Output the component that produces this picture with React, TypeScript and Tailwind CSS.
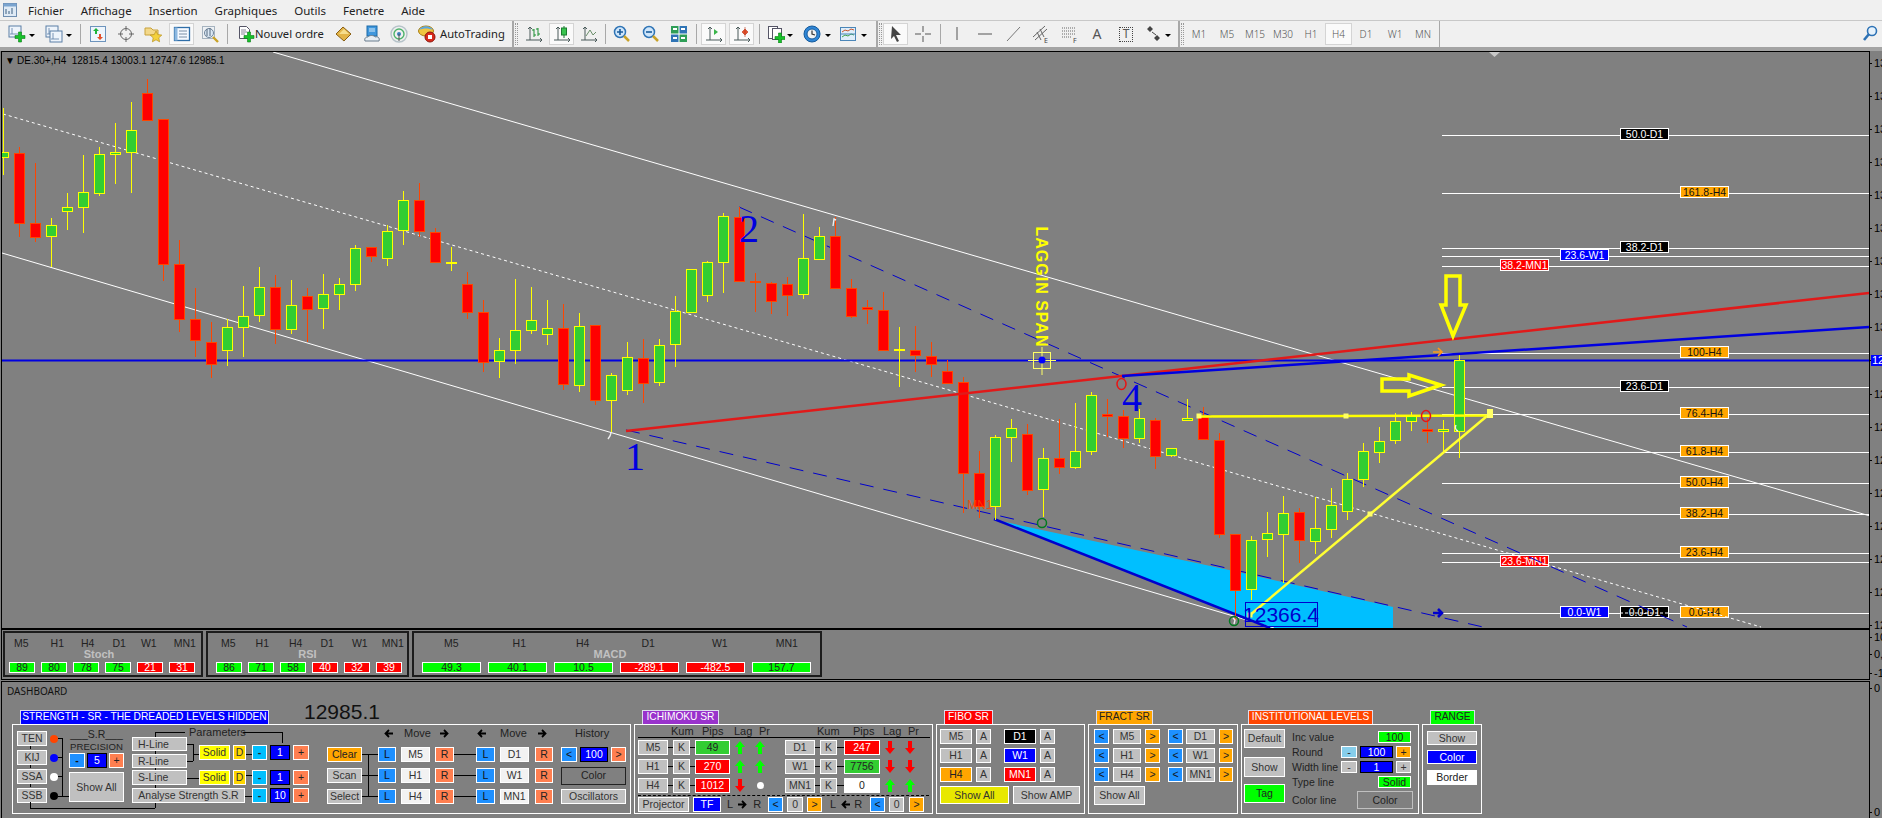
import type { ReactNode } from "react"

// ---- toolbar icons ----
const Ico = ({ children, w = 18 }: { children: ReactNode; w?: number }) => (
  <svg width={w} height={18} viewBox="0 0 18 18" className="shrink-0">{children}</svg>
)

const Plus = ({ x = 0, y = 0 }: { x?: number; y?: number }) => (
  <path transform={`translate(${x} ${y})`} d="M3.5 0h3v3.5H10v3H6.5V10h-3V6.5H0v-3h3.5z" fill="#17c22a" stroke="#0b7d18" strokeWidth=".6" />
)

const Axes = ({ c = "#4a5a5a" }: { c?: string }) => (
  <path d="M5 2v13M1 15h16M3 4l2-2 2 2M15 13l2 2-2 2" fill="none" stroke={c} strokeWidth="1" />
)

const Glass = ({ sign }: { sign?: "+" | "-" }) => (
  <Ico>
    <circle cx="7" cy="7" r="5.5" fill="#cfe6fb" stroke="#2f74b5" strokeWidth="1.5" />
    {sign && <path d={sign === "+" ? "M4 7h6M7 4v6" : "M4 7h6"} stroke="#1b5c9a" strokeWidth="1.6" />}
    <path d="M11 11l5 5" stroke="#c9a227" strokeWidth="2.5" />
  </Ico>
)

const Win = ({ x, y }: { x: number; y: number }) => (
  <g transform={`translate(${x} ${y})`}>
    <rect width="12" height="11" fill="#eef4fb" stroke="#5b7fa6" />
    <path d="M3 2v6M1 8h8" stroke="#5b7fa6" strokeWidth=".8" />
  </g>
)

const Caret = ({ w }: { w: string }) => (
  <div className={`flex justify-center ${w}`}>
    <div className="mt-[2px] h-0 w-0 border-x-[3px] border-t-[3px] border-x-transparent border-t-black" />
  </div>
)

const Sep = ({ w }: { w: string }) => (
  <div className={`flex justify-center ${w}`}><div className="h-[20px] w-px bg-[#a8a8a8]" /></div>
)

const Grip = () => (
  <div className="flex h-[26px] w-[7px] items-center justify-center border-l-2 border-[#a8a8a8]">
    <div className="h-[22px] w-[3px] border-y-0 border-x border-dotted border-[#999]" />
  </div>
)

const Cell = ({ w, children, end }: { w: string; children?: ReactNode; end?: boolean }) => (
  <div className={`flex h-full shrink-0 items-center ${end ? "justify-end" : "justify-center"} ${w}`}>{children}</div>
)

const Sel = ({ children }: { children: ReactNode }) => (
  <div className="flex h-[22px] w-[25px] shrink-0 items-center justify-center border border-[#d4d4d4] bg-[#fafafa]">{children}</div>
)

const Toolbar = () => (
  <div className="flex h-[27px] items-center border-t border-[#c8c8c8] bg-[#f0f0f0] text-[12px] text-[#222] font-['Noto_Sans',sans-serif]">
    <Cell w="w-[8px]" />
    <Cell w="w-[18px]"><Ico><Win x={1} y={1} /><Plus x={7} y={7} /></Ico></Cell>
    <Caret w="w-[12px]" />
    <Cell w="w-[7px]" />
    <Cell w="w-[18px]"><Ico><Win x={1} y={1} /><Win x={5} y={6} /></Ico></Cell>
    <Caret w="w-[12px]" />
    <Sep w="w-[11px]" />
    <Cell w="w-[23px]">
      <Ico>
        <rect x="1.5" y="1.5" width="15" height="15" fill="#eef5fc" stroke="#6d94bd" />
        <path d="M7 3l3 3H8v3H6V6H4z" fill="#1db33a" />
        <path d="M11 15l-3-3h2V9h2v3h2z" fill="#e4502a" />
      </Ico>
    </Cell>
    <Cell w="w-[34px]">
      <Ico>
        <circle cx="9" cy="9" r="5.5" fill="none" stroke="#666" />
        <path d="M9 1v5M9 12v5M1 9h5M12 9h5" stroke="#666" />
      </Ico>
    </Cell>
    <Cell w="w-[20px]">
      <Ico>
        <path d="M1 3h6l2 2h5v5H1z" fill="#f3d88a" stroke="#c8a23c" />
        <path d="M12 6l1.8 3.6 4 .5-3 2.7.8 4-3.6-2-3.6 2 .8-4-3-2.7 4-.5z" fill="#f4d13c" stroke="#b8901c" strokeWidth=".7" />
      </Ico>
    </Cell>
    <Cell w="w-[6px]" />
    <Sel>
      <Ico>
        <rect x="1.5" y="2.5" width="15" height="13" fill="#f5f9ff" stroke="#2f6ea8" strokeWidth="1.3" />
        <path d="M1.5 2.5h3v13h-3z" fill="#8db8e0" />
        <path d="M6 6h8M6 9h8M6 12h8" stroke="#7a8ea5" />
      </Ico>
    </Sel>
    <Cell w="w-[32px]">
      <Ico>
        <rect x="1.5" y="1.5" width="12" height="12" fill="#eef1f4" stroke="#a6b3bf" />
        <circle cx="8" cy="8" r="4.5" fill="#dbe8f5" stroke="#6f8499" />
        <path d="M6 4v7M9 3v8" stroke="#55697d" />
        <path d="M12 12l5 5" stroke="#c9a227" strokeWidth="2.4" />
      </Ico>
    </Cell>
    <Sep w="w-[3px]" />
    <Cell w="w-[26px]" end>
      <Ico>
        <path d="M2.5 1.5h7l3 3v9h-10z" fill="#fff" stroke="#556" />
        <path d="M4 5h5M4 7h6M4 9h4" stroke="#889" />
        <Plus x={7} y={7} />
      </Ico>
    </Cell>
    <div className="w-[69px] shrink-0 whitespace-nowrap text-[11.2px] leading-none">Nouvel ordre</div>
    <Cell w="w-[40px]">
      <Ico>
        <path d="M1 9l7-7 8 7-7 7z" fill="#e3b447" stroke="#8a5f12" />
        <path d="M4 9l5-5 5 5" fill="#f6dd8c" />
      </Ico>
    </Cell>
    <Cell w="w-[16px]">
      <Ico>
        <rect x="4" y="1" width="10" height="10" fill="#3f97dd" stroke="#1d6aa8" />
        <path d="M6 4h6M6 6h6" stroke="#d7ecfb" />
        <path d="M2 16c-1-3 1-4 3-4 1-2 6-2 7 0 3-1 5 1 4 4z" fill="#e6edf3" stroke="#6a7d8d" />
      </Ico>
    </Cell>
    <Cell w="w-[38px]">
      <Ico>
        <circle cx="9" cy="9" r="8" fill="none" stroke="#b6c3c9" strokeWidth="1.4" />
        <circle cx="9" cy="9" r="5" fill="none" stroke="#4db36b" strokeWidth="1.4" />
        <circle cx="9" cy="9" r="2" fill="#3b7fbf" />
        <path d="M9 9v7" stroke="#555" />
      </Ico>
    </Cell>
    <Cell w="w-[18px]">
      <Ico>
        <ellipse cx="8" cy="6" rx="7.5" ry="5" fill="#f0c540" stroke="#a77f16" />
        <path d="M1 5c3-5 11-5 14 0-4-2-10-2-14 0z" fill="#5aa6e0" />
        <circle cx="12" cy="12" r="5" fill="#d92a1c" stroke="#8e150c" />
        <rect x="10" y="10" width="4" height="4" fill="#fff" />
      </Ico>
    </Cell>
    <div className="ml-[4px] w-[65px] shrink-0 whitespace-nowrap text-[11.2px] leading-none">AutoTrading</div>
    <Cell w="w-[7px]" />
    <Grip />
    <Cell w="w-[30px]">
      <Ico>
        <Axes />
        <path d="M9 4v8M7 5h2M9 10h2M13 3v8M11 4h2M13 9h2" stroke="#1c8f33" fill="none" />
      </Ico>
    </Cell>
    <Sel>
      <Ico>
        <Axes />
        <path d="M11 1v12" stroke="#1a7c2e" />
        <rect x="8.5" y="3" width="5" height="7" fill="#38c44e" stroke="#1a7c2e" />
      </Ico>
    </Sel>
    <Cell w="w-[30px]">
      <Ico>
        <Axes />
        <path d="M6 11l4-6 3 5 3-3" fill="none" stroke="#6b8f6b" />
      </Ico>
    </Cell>
    <Sep w="w-[3px]" />
    <Cell w="w-[30px]"><Glass sign="+" /></Cell>
    <Cell w="w-[28px]"><Glass sign="-" /></Cell>
    <Cell w="w-[28px]">
      <Ico>
        <rect x="1" y="1" width="16" height="16" fill="#fff" />
        <rect x="1" y="1" width="7.5" height="7.5" fill="#2e9e57" />
        <rect x="9.5" y="1" width="7.5" height="7.5" fill="#2f74b5" />
        <rect x="1" y="9.5" width="7.5" height="7.5" fill="#2f74b5" />
        <rect x="9.5" y="9.5" width="7.5" height="7.5" fill="#2e9e57" />
        <path d="M3 4h4M11 4h4M3 13h4M11 13h4" stroke="#fff" strokeWidth="2" />
      </Ico>
    </Cell>
    <Sep w="w-[6px]" />
    <Cell w="w-[2px]" />
    <Sel><Ico><Axes /><path d="M9 4l4 3-4 3z" fill="#3ab54a" /></Ico></Sel>
    <Cell w="w-[3px]" />
    <Sel><Ico><Axes /><path d="M12 2v10M9 7l3-3 3 3-3 3z" fill="#e4502a" stroke="#b5341a" strokeWidth=".6" /></Ico></Sel>
    <Sep w="w-[10px]" />
    <Cell w="w-[21px]" end>
      <Ico>
        <rect x="1.5" y="1.5" width="9" height="12" fill="#fff" stroke="#556" />
        <rect x="5.5" y="3.5" width="9" height="11" fill="#fff" stroke="#556" />
        <Plus x={8} y={8} />
      </Ico>
    </Cell>
    <Caret w="w-[10px]" />
    <Cell w="w-[26px]" end>
      <Ico>
        <circle cx="9" cy="9" r="8" fill="#2f86d6" stroke="#155a9b" />
        <circle cx="9" cy="9" r="5" fill="#f2f2f2" stroke="#155a9b" />
        <path d="M9 5.5V9l3 1" fill="none" stroke="#333" strokeWidth="1.2" />
      </Ico>
    </Cell>
    <Caret w="w-[14px]" />
    <Cell w="w-[22px]" end>
      <Ico>
        <rect x="1.5" y="2.5" width="15" height="13" fill="#dfeefa" stroke="#4b86b8" />
        <path d="M3 7l3-2 3 1 3-2 3 1" fill="none" stroke="#c8542b" />
        <path d="M3 12l3-2 3 1 3-2 3 1" fill="none" stroke="#3fa34d" />
        <path d="M2 9h14" stroke="#4b86b8" />
      </Ico>
    </Cell>
    <Caret w="w-[14px]" />
    <Cell w="w-[5px]" />
    <Grip />
    <Sel><Ico><path d="M5 1l9 9H9l3 6-2 1-3-6-3 3z" fill="#444" /></Ico></Sel>
    <Cell w="w-[30px]"><Ico><path d="M9 1v6M9 11v6M1 9h6M11 9h6" stroke="#555" /></Ico></Cell>
    <Sep w="w-[5px]" />
    <Cell w="w-[28px]"><Ico><path d="M9 2v13" stroke="#555" /></Ico></Cell>
    <Cell w="w-[30px]"><Ico><path d="M1 9h14" stroke="#555" /></Ico></Cell>
    <Cell w="w-[26px]"><Ico><path d="M2 16L15 2" stroke="#777" /></Ico></Cell>
    <Cell w="w-[28px]">
      <Ico>
        <path d="M1 12L13 1M3 15L15 4M5 7l4 8M8 4l4 8" stroke="#666" fill="none" />
        <text x="12" y="18" fontSize="7" fill="#444">E</text>
      </Ico>
    </Cell>
    <Cell w="w-[30px]">
      <Ico>
        <path d="M1 3h14M1 6h14M1 9h14M1 12h10" stroke="#666" strokeDasharray="1 1" />
        <text x="12" y="18" fontSize="7" fill="#444">F</text>
      </Ico>
    </Cell>
    <Cell w="w-[24px]"><span className="text-[14px] leading-none text-[#555]">A</span></Cell>
    <Cell w="w-[34px]">
      <div className="flex h-[15px] w-[14px] items-center justify-center border border-dotted border-[#444] text-[12px] leading-none text-[#555]">T</div>
    </Cell>
    <Cell w="w-[20px]">
      <Ico>
        <path d="M6 1l3 3-3 3-3-3zM13 10l3 3-3 3-3-3z" fill="#444" />
        <path d="M8 7l4 3" stroke="#444" />
      </Ico>
    </Cell>
    <Caret w="w-[10px]" />
    <Cell w="w-[5px]" />
    <Grip />
    <div className="flex h-full items-center text-[10px] font-light text-[#555]">
      <Cell w="w-[28px]">M1</Cell>
      <Cell w="w-[28px]">M5</Cell>
      <Cell w="w-[28px]">M15</Cell>
      <Cell w="w-[28px]">M30</Cell>
      <Cell w="w-[28px]">H1</Cell>
      <div className="flex h-[22px] w-[27px] items-center justify-center border border-[#d4d4d4] bg-[#fafafa]">H4</div>
      <Cell w="w-[28px]">D1</Cell>
      <Cell w="w-[30px]">W1</Cell>
      <Cell w="w-[26px]">MN</Cell>
    </div>
    <div className="ml-[3px] h-[26px] w-px bg-[#a8a8a8]" />
    <div className="ml-auto mr-[4px]">
      <svg width="16" height="18" viewBox="0 0 16 18">
        <circle cx="10" cy="6" r="4.5" fill="#e6f2fc" stroke="#2d72b5" strokeWidth="1.6" />
        <path d="M7 9l-5 6" stroke="#2d72b5" strokeWidth="2.6" />
      </svg>
    </div>
  </div>
)

// ---- chart data (y values read off the 3x crops, hence the offset/3) ----
type Bar = [number, number, number, number, number]

const left: Bar[] = [
  [205, 335, 350, 405, 1], [320, 338, 547, 590, 0], [370, 548, 590, 605, 0], [535, 556, 590, 680, 1], [460, 502, 515, 570, 1],
  [345, 455, 500, 578, 1], [322, 343, 461, 467, 1], [250, 337, 344, 432, 1], [186, 271, 338, 458, 1], [118, 160, 241, 241, 0],
  [237, 237, 673, 722, 0], [600, 673, 838, 875, 0], [745, 838, 901, 950, 0], [845, 905, 972, 1015, 0], [838, 862, 932, 977, 1],
  [738, 829, 862, 950, 1], [680, 742, 827, 845, 1], [705, 742, 868, 912, 0], [720, 796, 868, 882, 1], [745, 769, 808, 905, 0],
  [702, 763, 805, 867, 1], [715, 733, 764, 810, 1], [616, 625, 733, 752, 1], [620, 622, 650, 665, 0], [555, 574, 656, 678, 1],
  [453, 481, 572, 615, 1], [430, 481, 575, 592, 0], [565, 577, 667, 668, 0], [622, 666, 669, 692, 1], [695, 733, 817, 838, 0],
  [780, 817, 968, 995, 0], [895, 931, 964, 1013, 1], [717, 871, 932, 972, 1], [742, 841, 872, 882, 1], [780, 865, 884, 915, 1],
  [792, 865, 1032, 1050, 0], [820, 859, 1037, 1055, 1], [855, 855, 1080, 1095, 0], [1000, 1006, 1082, 1175, 1], [905, 952, 1052, 1065, 1],
]

const middle: Bar[] = [
  [478, 533, 607, 670, 0], [478, 496, 607, 617, 1], [348, 393, 493, 560, 1], [267, 267, 395, 395, 1], [243, 247, 347, 365, 1],
  [100, 109, 247, 338, 1], [80, 112, 303, 305, 0], [280, 303, 307, 395, 0], [305, 308, 361, 402, 0], [292, 311, 343, 408, 0],
  [102, 235, 344, 358, 1], [142, 169, 237, 240, 1], [110, 169, 325, 325, 0], [297, 325, 409, 415, 0], [360, 380, 386, 432, 0],
  [335, 389, 509, 512, 0], [440, 507, 510, 620, 1], [437, 510, 525, 575, 0], [485, 527, 552, 590, 0], [540, 572, 607, 610, 0],
  [590, 607, 880, 1000, 0], [812, 880, 978, 1015, 0], [765, 771, 977, 1020, 1], [717, 745, 773, 845, 1], [733, 761, 928, 945, 0],
  [805, 835, 928, 1010, 1], [717, 833, 859, 882, 0], [670, 814, 862, 868, 1], [637, 646, 815, 825, 1], [658, 701, 706, 770, 0],
  [690, 707, 772, 805, 0], [688, 715, 776, 790, 1], [715, 719, 826, 868, 0], [805, 805, 827, 830, 1], [658, 715, 722, 722, 1],
  [680, 710, 777, 780, 0], [760, 779, 1062, 1075, 0], [1062, 1063, 1230, 1320, 0],
]

const right: Bar[] = [
  [858, 871, 1018, 1050, 1], [787, 850, 868, 920, 1], [738, 790, 853, 1000, 1], [775, 787, 871, 940, 0], [740, 835, 874, 912, 1],
  [715, 764, 835, 865, 1], [670, 688, 784, 810, 1], [578, 604, 688, 712, 1], [530, 572, 604, 640, 1], [490, 514, 571, 583, 1],
  [487, 497, 513, 542, 1], [505, 538, 544, 580, 0], [510, 538, 544, 605, 1], [310, 331, 543, 623, 1],
]

const series = [
  { start: 0, top: 40, rows: left },
  { start: 40, top: 180, rows: middle },
  { start: 78, top: 250, rows: right },
]

const Candles = () => (
  <g shapeRendering="crispEdges">
    {series.flatMap(({ start, top, rows }) =>
      rows.map(([hi, open, close, lo, up], n) => {
        const cx = Math.round(3 + (start + n) * 16)
        const c = up ? "#ffff00" : "#ff4500"
        const y = top + open / 3
        return (
          <g key={start + n}>
            <line x1={cx + 0.5} x2={cx + 0.5} y1={top + hi / 3} y2={top + lo / 3} stroke={c} />
            <rect x={cx - 4.5} y={Math.round(y) + 0.5} width={10} height={Math.max(1, Math.round((close - open) / 3))} fill={up ? "#32cd32" : "#ff0000"} stroke={c} />
          </g>
        )
      }),
    )}
  </g>
)

const tags: Record<string, { x: number; fill: string; text: string }> = {
  H4: { x: 1680, fill: "#ffa500", text: "#111" },
  D1: { x: 1620, fill: "#000", text: "#fff" },
  W1: { x: 1560, fill: "#0000ff", text: "#fff" },
  MN1: { x: 1500, fill: "#ff0000", text: "#fff" },
}

const levels: [string, string, number][] = [
  ["50.0", "D1", 135], ["161.8", "H4", 193], ["38.2", "D1", 248], ["23.6", "W1", 256], ["38.2", "MN1", 266],
  ["100", "H4", 353], ["23.6", "D1", 387], ["76.4", "H4", 414], ["61.8", "H4", 452], ["50.0", "H4", 483],
  ["38.2", "H4", 514], ["23.6", "H4", 553], ["23.6", "MN1", 562], ["0.0", "W1", 613], ["0.0", "D1", 613], ["0.0", "H4", 613],
]

const Marker = ({ x, y }: { x: number; y: number }) => <rect x={x - 2.5} y={y - 2.5} width="5" height="5" fill="#ffff66" />

const MainChart = () => (
  <svg width={1867} height={576} viewBox="2 52 1867 576" className="block">
    {levels.map(([n, tf, y]) => (
      <line key={n + tf} x1="1442" x2="1869" y1={y + 0.5} y2={y + 0.5} stroke="#fff" shapeRendering="crispEdges" />
    ))}
    {levels.map(([n, tf, y]) => {
      const t = tags[tf]
      return (
        <g key={n + tf}>
          <rect x={t.x + 0.5} y={y - 6.5} width="48" height="11" rx="1" fill={t.fill} stroke="#fff" shapeRendering="crispEdges" />
          <text x={t.x + 24.5} y={y + 3} textAnchor="middle" fontSize="10.5" fill={t.text}>{`${n}-${tf}`}</text>
        </g>
      )
    })}
    <line x1="1620" x2="1668" y1="613" y2="613" stroke="#fff" strokeDasharray="3 2" />

    <polygon points="1000,521 1229,570 1393,607 1393,628 1270,628 1240,617" fill="#00bfff" />

    <line x1="273" y1="52" x2="1869" y2="515.7" stroke="#fff" />
    <line x1="2" y1="253" x2="1274" y2="628" stroke="#fff" />
    <line x1="3" y1="114" x2="1761" y2="627" stroke="#fff" strokeDasharray="3 3" />
    <line x1="626" y1="430" x2="1483" y2="627" stroke="#0000cd" strokeDasharray="14 10" />
    <line x1="739" y1="207" x2="1687" y2="627" stroke="#0000cd" strokeDasharray="14 10" />
    <line x1="2" y1="360.5" x2="1869" y2="360.5" stroke="#0000e0" strokeWidth="2" />
    <line x1="994" y1="519" x2="1270" y2="628" stroke="#0000cd" strokeWidth="2.5" />

    <Candles />

    <line x1="626" y1="431" x2="1869" y2="293" stroke="#e01a1a" strokeWidth="2.5" />
    <line x1="1122" y1="376" x2="1869" y2="327" stroke="#0000e0" strokeWidth="2.5" />

    <line x1="1199" y1="416.5" x2="1490" y2="415.5" stroke="#ffff00" strokeWidth="2.5" />
    <line x1="1250" y1="615" x2="1487" y2="416" stroke="#ffff33" strokeWidth="2.5" />
    <Marker x={1199} y={416} />
    <Marker x={1346} y={416} />
    <rect x="1487" y="409" width="6" height="9" fill="#ffff66" />
    <Marker x={1250} y={615} />
    <Marker x={1370} y={514} />

    <polygon points="1446,276 1460,276 1460,305 1466,305 1453,336 1441,305 1446,305" fill="none" stroke="#ffff00" strokeWidth="3.5" />
    <polygon points="1382,379 1409,379 1409,375 1441,385 1409,396 1409,391 1382,391" fill="none" stroke="#ffff00" strokeWidth="3.5" />

    <ellipse cx="1426" cy="416" rx="4.5" ry="5.5" fill="none" stroke="#e81414" strokeWidth="1.5" />
    <ellipse cx="1121.5" cy="384" rx="4.5" ry="5.5" fill="none" stroke="#e81414" strokeWidth="1.5" />
    <circle cx="1042" cy="523" r="4.5" fill="none" stroke="#007a1f" strokeWidth="1.5" />
    <circle cx="1234" cy="621" r="4.5" fill="none" stroke="#007a1f" strokeWidth="1.5" />
    <path d="M1233 618l2 2-1 4M1458 431c-3 -1 -3 -4 -2 -6M833 226l1-7 2 1M608 439l2-3 1-3" fill="none" stroke="#eee" strokeWidth="1.4" />
    <path d="M1433 352h9M1438 348l4 4-4 4" fill="none" stroke="#ff9a1a" strokeWidth="1.6" />
    <path d="M1433 613h8M1438 609l4 4-4 4" fill="none" stroke="#0000cd" strokeWidth="2.6" />

    <rect x="1033.5" y="352.5" width="17" height="16" fill="none" stroke="#ffff66" />
    <path d="M1042 347v28M1028 360.5h28" stroke="#ffff66" />
    <circle cx="1042" cy="360" r="3.5" fill="#0000ff" />
    <text transform="rotate(90 1042 287)" x="1042" y="293" textAnchor="middle" fontSize="16" fontWeight="700" letterSpacing="1" fill="#ffff00">LAGGIN SPAN</text>
    <text x="980" y="509" textAnchor="middle" fontSize="12" fill="#ff4500" opacity=".8">MN1</text>

    <g className="font-['Liberation_Serif',serif]" fontSize="40" fill="#0000e0" textAnchor="middle">
      <text x="635" y="470">1</text>
      <text x="749" y="242">2</text>
      <text x="1132" y="411">4</text>
    </g>
    <rect x="1245.5" y="602.5" width="72" height="24" fill="none" stroke="#0000cd" />
    <text x="1281" y="622" textAnchor="middle" fontSize="21" fill="#0000cd">12366.4</text>

    <polygon points="1489,52 1500,52 1494.5,57" fill="#c8c8c8" />

    <text x="5" y="64" fontSize="10" fill="#000">▼</text>
    <text x="17" y="64" fontSize="10" fill="#000" xmlSpace="preserve">DE.30+,H4  12815.4 13003.1 12747.6 12985.1</text>
  </svg>
)

const Axis = ({ h, ticks }: { h: number; ticks: [number, string][] }) => (
  <svg width={12} height={h} className="block shrink-0" viewBox={`0 0 12 ${h}`}>
    {ticks.map(([y, t]) => (
      <g key={y}>
        <line x1="0" x2="2" y1={y + 0.5} y2={y + 0.5} stroke="#000" />
        <text x="4" y={y + 4} fontSize="11" fill="#000">{t}</text>
      </g>
    ))}
  </svg>
)

// 33px between price ticks, first one at y=63 on the page
const priceTicks: [number, string][] = Array.from({ length: 18 }, (_, i) => [
  Math.round(12 + i * 33.05),
  i < 9 ? "13" : "12",
])

// ---- dashboard ----
const tones = {
  grey: "bg-[#c0c0c0] text-[#333] border-white",
  soft: "bg-[#f2f2f2] text-[#333] border-white",
  navy: "bg-[#0000ff] text-white border-black",
  blue: "bg-[#0000ff] text-white border-white",
  dodger: "bg-[#1e90ff] text-[#111] border-white",
  coral: "bg-[#ff7f50] text-[#222] border-white",
  gold: "bg-[#ffd700] text-[#333] border-white",
  yellow: "bg-[#ffff00] text-[#333] border-white",
  lemon: "bg-[#e8e800] text-[#333] border-white",
  sky: "bg-[#00bfff] text-[#222] border-white",
  pale: "bg-[#87ceeb] text-[#222] border-white",
  orange: "bg-[#ffa500] text-[#222] border-white",
  lime: "bg-[#00ff00] text-[#222] border-white",
  leaf: "bg-[#32cd32] text-[#222] border-white",
  red: "bg-[#ff0000] text-white border-white",
  black: "bg-black text-white border-white",
  white: "bg-white text-[#222] border-white",
  hollow: "text-[#222] border-[#222]",
  ghost: "text-[#222] border-[#c0c0c0]",
}

type Tone = keyof typeof tones

const Btn = ({ t = "grey", w, h = "h-[15px]", children }: { t?: Tone; w: string; h?: string; children?: ReactNode }) => (
  <div className={`flex shrink-0 items-center justify-center overflow-hidden whitespace-nowrap border text-[10.5px] leading-none ${tones[t]} ${w} ${h}`}>{children}</div>
)

const Tf = ({ dir }: { dir: "l" | "r" }) => (
  <svg width="10" height="9" viewBox="0 0 10 9" className="shrink-0">
    <path d={dir === "l" ? "M9 4.5H2M5 1L1.5 4.5 5 8" : "M1 4.5h7M5 1l3.5 3.5L5 8"} fill="none" stroke="#000" strokeWidth="1.8" />
  </svg>
)

const Panel = ({ title, tab, w, children, extra }: { title: string; tab: string; w: string; children: ReactNode; extra?: ReactNode }) => (
  <div className={`shrink-0 ${w}`}>
    <div className="flex h-[14px]">
      <div className={`flex items-center justify-center whitespace-nowrap border border-b-0 text-[10.2px] leading-none ${tab}`}>{title}</div>
      {extra}
    </div>
    <div className="relative flex h-[90px] border border-white">{children}</div>
  </div>
)

const Solid = () => (
  <div className="flex items-center">
    <Btn t="yellow" w="w-[31px]">Solid</Btn>
    <div className="ml-[3px]"><Btn t="gold" w="w-[13px]">D</Btn></div>
    <div className="ml-[6px]"><Btn t="sky" w="w-[15px]"><b>-</b></Btn></div>
    <div className="ml-[3px]"><Btn t="navy" w="w-[20px]">1</Btn></div>
    <div className="ml-[3px]"><Btn t="coral" w="w-[16px]">+</Btn></div>
  </div>
)

const MoveRow = ({ lead, leadTone, a, b, children }: { lead: string; leadTone: Tone; a: string; b: string; children: ReactNode }) => (
  <div className="flex h-[15px] items-center">
    <Btn t={leadTone} w="w-[35px]">{lead}</Btn>
    <div className="ml-[16px]"><Btn t="dodger" w="w-[18px]">L</Btn></div>
    <div className="ml-[5px]"><Btn t="soft" w="w-[29px]">{a}</Btn></div>
    <div className="ml-[5px]"><Btn t="coral" w="w-[19px]">R</Btn></div>
    <div className="ml-[22px]"><Btn t="dodger" w="w-[19px]">L</Btn></div>
    <div className="ml-[5px]"><Btn t="soft" w="w-[29px]">{b}</Btn></div>
    <div className="ml-[6px]"><Btn t="coral" w="w-[18px]">R</Btn></div>
    <div className="ml-[8px] flex items-center">{children}</div>
  </div>
)

const Strength = () => (
  <Panel
    title="STRENGTH - SR - THE DREADED LEVELS HIDDEN"
    tab="ml-[8px] w-[249px] bg-[#0000ff] text-white border-[#dde]"
    w="w-[619px]"
    extra={<div className="ml-[35px] -mt-[10px] text-[21px] leading-[24px] text-[#111]">12985.1</div>}
  >
    <svg className="absolute -left-px -top-px" width="619" height="90" viewBox="12 724 619 90" shapeRendering="crispEdges">
      <path
        d="M58 738h4M58 757h4M58 776h4M58 796h12M62 738v58M30 746v3M30 765v3M30 784v3M30 802v6M30 808h125M155 732v76M155 732h30M243 732h39M282 732v11M187 744h6M187 761h6M193 744v17M193 754h6M187 778h12M245 796h7M246 754h6M246 775h6M362 754h16M362 775h16M362 796h16M368 754v42M454 754h22M454 775h22M454 796h22"
        fill="none"
        stroke="#000"
      />
    </svg>

    <div className="ml-[4px] mt-[6px] flex w-[30px] flex-col gap-[4px]">
      <Btn w="w-[30px]">TEN</Btn>
      <Btn w="w-[30px]">KIJ</Btn>
      <Btn w="w-[30px]">SSA</Btn>
      <Btn w="w-[30px]">SSB</Btn>
    </div>
    <div className="relative ml-[3px] mt-[6px] flex w-[8px] flex-col gap-[4px]">
      <div className="flex h-[15px] items-center"><div className="h-[8px] w-[8px] rounded-full bg-[#ff4500]" /></div>
      <div className="flex h-[15px] items-center"><div className="h-[8px] w-[8px] rounded-full bg-[#0000ff]" /></div>
      <div className="flex h-[15px] items-center"><div className="h-[8px] w-[8px] rounded-full bg-white" /></div>
      <div className="flex h-[15px] items-center"><div className="h-[8px] w-[8px] rounded-full bg-black" /></div>
    </div>
    <div className="relative ml-[11px] mt-[3px] flex w-[55px] flex-col">
      <div className="h-[12px] text-center text-[10.5px] leading-[12px] text-[#222]">___S.R___</div>
      <div className="h-[13px] text-center text-[9.6px] leading-[13px] text-[#222]">PRECISION</div>
      <div className="flex gap-[2px]">
        <Btn t="dodger" w="w-[16px]"><b>-</b></Btn>
        <Btn t="navy" w="w-[20px]">5</Btn>
        <Btn t="coral" w="w-[15px]">+</Btn>
      </div>
      <div className="mt-[4px]"><Btn w="w-[55px]" h="h-[30px]">Show All</Btn></div>
    </div>

    <div className="relative ml-[8px] mt-[3px] flex w-[177px] flex-col">
      <div className="h-[9px] pl-[57px] text-[11px] leading-[8px] text-[#222]">Parameters</div>
      <div className="flex h-[31px] items-center">
        <div className="flex w-[55px] flex-col gap-[3px]">
          <Btn w="w-[55px]" h="h-[14px]"><span className="w-full pl-[5px] text-left">H-Line</span></Btn>
          <Btn w="w-[55px]" h="h-[14px]"><span className="w-full pl-[5px] text-left">R-Line</span></Btn>
        </div>
        <div className="ml-[12px]"><Solid /></div>
      </div>
      <div className="mt-[2px] flex h-[15px] items-center">
        <Btn w="w-[55px]"><span className="w-full pl-[5px] text-left">S-Line</span></Btn>
        <div className="ml-[12px]"><Solid /></div>
      </div>
      <div className="mt-[3px] flex h-[15px] items-center">
        <Btn w="w-[113px]">Analyse Strength S.R</Btn>
        <div className="ml-[7px]"><Btn t="sky" w="w-[15px]"><b>-</b></Btn></div>
        <div className="ml-[3px]"><Btn t="navy" w="w-[20px]">10</Btn></div>
        <div className="ml-[3px]"><Btn t="coral" w="w-[16px]">+</Btn></div>
      </div>
    </div>

    <div className="relative ml-[18px] mt-[3px] flex flex-col">
      <div className="mb-[8px] flex h-[11px] items-center text-[11px] leading-none text-[#222]">
        <div className="ml-[57px]"><Tf dir="l" /></div>
        <span className="ml-[10px] w-[25px]">Move</span>
        <div className="ml-[10px]"><Tf dir="r" /></div>
        <div className="ml-[28px]"><Tf dir="l" /></div>
        <span className="ml-[13px] w-[25px]">Move</span>
        <div className="ml-[12px]"><Tf dir="r" /></div>
        <span className="ml-[28px]">History</span>
      </div>
      <div className="flex flex-col gap-[6px]">
        <MoveRow lead="Clear" leadTone="orange" a="M5" b="D1">
          <Btn t="dodger" w="w-[16px]">&lt;</Btn>
          <div className="ml-[3px]"><Btn t="navy" w="w-[28px]">100</Btn></div>
          <div className="ml-[3px]"><Btn t="coral" w="w-[15px]">&gt;</Btn></div>
        </MoveRow>
        <MoveRow lead="Scan" leadTone="grey" a="H1" b="W1">
          <Btn t="hollow" w="w-[65px]" h="h-[18px]">Color</Btn>
        </MoveRow>
        <MoveRow lead="Select" leadTone="grey" a="H4" b="MN1">
          <Btn w="w-[65px]">Oscillators</Btn>
        </MoveRow>
      </div>
    </div>
  </Panel>
)

const Fat = ({ up, c }: { up: boolean; c: string }) => (
  <svg width="10" height="13" viewBox="0 0 10 13" className="shrink-0">
    <path d={up ? "M5 0l5 6H7v7H3V6H0z" : "M5 13L0 7h3V0h4v7h3z"} fill={c} />
  </svg>
)

const IchiSide = ({ tf, pips, tone, lag, pr, mid, gap }: { tf: string; pips: string; tone: Tone; lag: ReactNode; pr: ReactNode; mid: string; gap: string }) => (
  <div className="flex items-center">
    <Btn w="w-[30px]">{tf}</Btn>
    <div className="h-px w-[5px] bg-black" />
    <Btn w="w-[17px]">K</Btn>
    <div className={`h-px bg-black ${gap}`} />
    <Btn t={tone} w={mid}>{pips}</Btn>
    <div className="flex w-[20px] justify-center">{lag}</div>
    <div className="flex w-[20px] justify-center">{pr}</div>
  </div>
)

const up = <Fat up c="#00ff00" />
const down = <Fat up={false} c="#ff0000" />
const dot = <div className="h-[7px] w-[7px] rounded-full bg-white" />

const IchiRow = ({ a, b }: { a: ReactNode; b: ReactNode }) => (
  <div className="flex gap-[15px]">{a}{b}</div>
)

const Ichimoku = () => (
  <Panel title="ICHIMOKU SR" tab="ml-[8px] w-[77px] bg-[#9932cc] text-white border-[#dde]" w="w-[299px]">
    <div className="ml-[3px] flex flex-col">
      <div className="flex h-[13px] w-[292px] items-center border-b border-black text-[11px] leading-none text-[#222]">
        <span className="ml-[33px] w-[31px]">Kum</span>
        <span className="w-[32px]">Pips</span>
        <span className="w-[25px]">Lag</span>
        <span className="w-[58px]">Pr</span>
        <span className="w-[36px]">Kum</span>
        <span className="w-[30px]">Pips</span>
        <span className="w-[25px]">Lag</span>
        <span>Pr</span>
      </div>
      <div className="mt-[2px] flex flex-col gap-[4px]">
        <IchiRow
          a={<IchiSide tf="M5" pips="49" tone="leaf" lag={up} pr={up} mid="w-[35px]" gap="w-[5px]" />}
          b={<IchiSide tf="D1" pips="247" tone="red" lag={down} pr={down} mid="w-[36px]" gap="w-[7px]" />}
        />
        <IchiRow
          a={<IchiSide tf="H1" pips="270" tone="red" lag={up} pr={up} mid="w-[35px]" gap="w-[5px]" />}
          b={<IchiSide tf="W1" pips="7756" tone="leaf" lag={down} pr={down} mid="w-[36px]" gap="w-[7px]" />}
        />
        <IchiRow
          a={<IchiSide tf="H4" pips="1012" tone="red" lag={down} pr={dot} mid="w-[35px]" gap="w-[5px]" />}
          b={<IchiSide tf="MN1" pips="0" tone="white" lag={up} pr={up} mid="w-[36px]" gap="w-[7px]" />}
        />
      </div>
      <div className="mt-[2px] h-0 w-[291px] border-t border-dashed border-black" />
      <div className="mt-[1px] flex items-center text-[11px] leading-none text-[#222]">
        <Btn w="w-[51px]">Projector</Btn>
        <div className="ml-[4px]"><Btn t="blue" w="w-[28px]">TF</Btn></div>
        <span className="ml-[6px]">L</span>
        <div className="ml-[4px]"><Tf dir="r" /></div>
        <span className="ml-[6px]">R</span>
        <div className="ml-[7px]"><Btn t="dodger" w="w-[15px]">&lt;</Btn></div>
        <div className="ml-[4px]"><Btn t="grey" w="w-[16px]">0</Btn></div>
        <div className="ml-[4px]"><Btn t="orange" w="w-[15px]">&gt;</Btn></div>
        <span className="ml-[8px]">L</span>
        <div className="ml-[5px]"><Tf dir="l" /></div>
        <span className="ml-[3px]">R</span>
        <div className="ml-[8px]"><Btn t="dodger" w="w-[15px]">&lt;</Btn></div>
        <div className="ml-[4px]"><Btn t="grey" w="w-[15px]">0</Btn></div>
        <div className="ml-[5px]"><Btn t="orange" w="w-[15px]">&gt;</Btn></div>
      </div>
    </div>
  </Panel>
)

const FiboRow = ({ a, ta = "grey", b, tb }: { a: string; ta?: Tone; b: string; tb: Tone }) => (
  <div className="flex">
    <Btn t={ta} w="w-[32px]">{a}</Btn>
    <div className="ml-[4px]"><Btn w="w-[15px]">A</Btn></div>
    <div className="ml-[13px]"><Btn t={tb} w="w-[32px]">{b}</Btn></div>
    <div className="ml-[4px]"><Btn w="w-[15px]">A</Btn></div>
  </div>
)

const Fibo = () => (
  <Panel title="FIBO SR" tab="ml-[8px] w-[49px] bg-[#ff0000] text-white border-[#dde]" w="w-[149px]">
    <div className="ml-[3px] mt-[4px] flex flex-col gap-[4px]">
      <FiboRow a="M5" b="D1" tb="black" />
      <FiboRow a="H1" b="W1" tb="blue" />
      <FiboRow a="H4" ta="orange" b="MN1" tb="red" />
      <div className="flex gap-[4px]">
        <Btn t="lemon" w="w-[69px]" h="h-[18px]">Show All</Btn>
        <Btn w="w-[67px]" h="h-[18px]">Show AMP</Btn>
      </div>
    </div>
  </Panel>
)

const FractRow = ({ a, b }: { a: string; b: string }) => (
  <div className="flex">
    <Btn t="dodger" w="w-[15px]">&lt;</Btn>
    <div className="ml-[4px]"><Btn w="w-[28px]">{a}</Btn></div>
    <div className="ml-[4px]"><Btn t="orange" w="w-[15px]">&gt;</Btn></div>
    <div className="ml-[8px]"><Btn t="dodger" w="w-[15px]">&lt;</Btn></div>
    <div className="ml-[3px]"><Btn w="w-[29px]">{b}</Btn></div>
    <div className="ml-[4px]"><Btn t="orange" w="w-[14px]">&gt;</Btn></div>
  </div>
)

const Fract = () => (
  <Panel title="FRACT SR" tab="ml-[8px] w-[57px] bg-[#ffa500] text-[#222] border-[#dde]" w="w-[150px]">
    <div className="ml-[5px] mt-[4px] flex flex-col gap-[4px]">
      <FractRow a="M5" b="D1" />
      <FractRow a="H1" b="W1" />
      <FractRow a="H4" b="MN1" />
      <Btn w="w-[51px]" h="h-[19px]">Show All</Btn>
    </div>
  </Panel>
)

const Institutional = () => (
  <Panel title="INSTITUTIONAL LEVELS" tab="ml-[7px] w-[125px] bg-[#ff4500] text-white border-[#dde]" w="w-[178px]">
    <div className="ml-[2px] mt-[4px] flex w-[41px] flex-col">
      <Btn w="w-[41px]" h="h-[19px]">Default</Btn>
      <div className="mt-[9px]"><Btn w="w-[41px]" h="h-[20px]">Show</Btn></div>
      <div className="mt-[7px]"><Btn t="lime" w="w-[41px]" h="h-[19px]">Tag</Btn></div>
    </div>
    <div className="ml-[7px] mt-[6px] flex w-[119px] flex-col gap-[3px] text-[10.5px] leading-none text-[#222]">
      <div className="flex h-[12px] items-center justify-between">
        <span>Inc value</span>
        <Btn t="lime" w="w-[33px]" h="h-[12px]">100</Btn>
      </div>
      <div className="flex h-[12px] items-center">
        <span>Round</span>
        <div className="ml-auto flex gap-[3px]">
          <Btn t="pale" w="w-[16px]" h="h-[12px]">-</Btn>
          <Btn t="navy" w="w-[33px]" h="h-[12px]">100</Btn>
          <Btn t="orange" w="w-[15px]" h="h-[12px]">+</Btn>
        </div>
      </div>
      <div className="flex h-[12px] items-center">
        <span>Width line</span>
        <div className="ml-auto flex gap-[3px]">
          <Btn w="w-[16px]" h="h-[12px]">-</Btn>
          <Btn t="navy" w="w-[33px]" h="h-[12px]">1</Btn>
          <Btn w="w-[15px]" h="h-[12px]">+</Btn>
        </div>
      </div>
      <div className="flex h-[12px] items-center justify-between">
        <span>Type line</span>
        <Btn t="lime" w="w-[33px]" h="h-[12px]">Solid</Btn>
      </div>
      <div className="flex h-[18px] items-center justify-between">
        <span>Color line</span>
        <div className="-mr-[2px]"><Btn t="ghost" w="w-[56px]" h="h-[18px]">Color</Btn></div>
      </div>
    </div>
  </Panel>
)

const Range = () => (
  <Panel title="RANGE" tab="ml-[8px] w-[45px] bg-[#00ff00] text-[#222] border-[#dde]" w="w-[60px]">
    <div className="ml-[4px] mt-[6px] flex flex-col">
      <Btn w="w-[50px]" h="h-[14px]">Show</Btn>
      <div className="mt-[5px]"><Btn t="blue" w="w-[50px]" h="h-[14px]">Color</Btn></div>
      <div className="mt-[6px]"><Btn t="white" w="w-[50px]">Border</Btn></div>
    </div>
  </Panel>
)

const Reading = ({ v, w }: { v: string; w: string }) => (
  <Btn t={v.startsWith("-") || (Number(v) < 50 && w === "w-[26px]") ? "red" : "lime"} w={w} h="h-[11px]">{v}</Btn>
)

const Oscillators = () => (
  <div className="ml-px flex gap-[3px] pt-px text-[10.5px] leading-none text-[#222]">
    <div className="h-[46px] w-[200px] border-2 border-[#1c1c1c]">
      <div className="flex h-[16px] items-end pb-[1px]">
        <span className="ml-[9px]">M5</span><span className="ml-[22px]">H1</span><span className="ml-[17px]">H4</span>
        <span className="ml-[18px]">D1</span><span className="ml-[15px]">W1</span><span className="ml-[17px]">MN1</span>
      </div>
      <div className="h-[11px] pr-[8px] text-center text-[11px] font-bold leading-[11px] text-[#c0c0c0]">Stoch</div>
      <div className="mt-[2px] flex gap-[6px] pl-[4px]">
        {["89", "80", "78", "75", "21", "31"].map((v, i) => <Reading key={i} v={v} w="w-[26px]" />)}
      </div>
    </div>
    <div className="h-[46px] w-[203px] border-2 border-[#1c1c1c]">
      <div className="flex h-[16px] items-end pb-[1px]">
        <span className="ml-[13px]">M5</span><span className="ml-[20px]">H1</span><span className="ml-[20px]">H4</span>
        <span className="ml-[18px]">D1</span><span className="ml-[18px]">W1</span><span className="ml-[14px]">MN1</span>
      </div>
      <div className="h-[11px] text-center text-[11px] font-bold leading-[11px] text-[#c0c0c0]">RSI</div>
      <div className="mt-[2px] flex gap-[6px] pl-[8px]">
        {["86", "71", "58", "40", "32", "39"].map((v, i) => <Reading key={i} v={v} w="w-[26px]" />)}
      </div>
    </div>
    <div className="h-[46px] w-[410px] border-2 border-[#1c1c1c]">
      <div className="flex h-[16px] items-end pb-[1px]">
        <span className="ml-[30px]">M5</span><span className="ml-[54px]">H1</span><span className="ml-[50px]">H4</span>
        <span className="ml-[52px]">D1</span><span className="ml-[57px]">W1</span><span className="ml-[48px]">MN1</span>
      </div>
      <div className="h-[11px] pr-[14px] text-center text-[11px] font-bold leading-[11px] text-[#c0c0c0]">MACD</div>
      <div className="mt-[2px] flex gap-[7px] pl-[8px]">
        {["49.3", "40.1", "10.5", "-289.1", "-482.5", "157.7"].map((v) => <Reading key={v} v={v} w="w-[59px]" />)}
      </div>
    </div>
  </div>
)

const menu = ["Fichier", "Affichage", "Insertion", "Graphiques", "Outils", "Fenetre", "Aide"]

export default function App() {
  return (
    <div className="flex h-[818px] w-[1882px] flex-col overflow-hidden bg-[#808080] font-['Liberation_Sans',sans-serif]">
      <div className="flex h-[20px] items-center bg-[#f0f0f0] pl-[3px] text-[11.5px] text-[#222] font-['Noto_Sans',sans-serif]">
        <svg width="14" height="14" viewBox="0 0 14 14" className="mr-[11px]">
          <rect x=".5" y=".5" width="13" height="13" fill="#dfeaf5" stroke="#6e8db0" />
          <rect x=".5" y=".5" width="13" height="3" fill="#7ba4cf" />
          <path d="M3 11V6M6 11V8M9 11V5" stroke="#3d5e80" />
        </svg>
        <div className="flex gap-[17px] pt-px">
          {menu.map((m) => <span key={m}>{m}</span>)}
        </div>
      </div>
      <Toolbar />
      <div className="h-[4px] shrink-0 bg-[#a4a4a4]" />

      <div className="flex h-[578px] shrink-0">
        <div className="ml-px w-[1869px] shrink-0 border border-black">
          <MainChart />
        </div>
        <div className="relative">
          <Axis h={578} ticks={priceTicks} />
          <div className="absolute left-px top-[304px] flex h-[11px] w-[11px] items-center overflow-hidden bg-[#0000ff] pl-[1px] text-[11px] leading-none text-white">12</div>
        </div>
      </div>

      <div className="flex h-[51px] shrink-0">
        <div className="ml-px w-[1869px] shrink-0 border border-black">
          <Oscillators />
        </div>
        <Axis h={51} ticks={[[8, "10"], [25, "0,"], [44, "-1"]]} />
      </div>

      <div className="mt-px flex h-[137px] shrink-0">
        <div className="ml-px w-[1869px] shrink-0 border-x border-t border-black">
          <div className="h-[28px] pl-[5px] pt-[4px] text-[10px] leading-none text-[#111] font-['Noto_Sans',sans-serif]">DASHBOARD</div>
          <div className="ml-[10px] flex gap-[3px]">
            <Strength />
            <Ichimoku />
            <Fibo />
            <Fract />
            <Institutional />
            <Range />
          </div>
        </div>
        <Axis h={137} ticks={[[7, "0"], [131, "0"]]} />
      </div>
    </div>
  )
}
